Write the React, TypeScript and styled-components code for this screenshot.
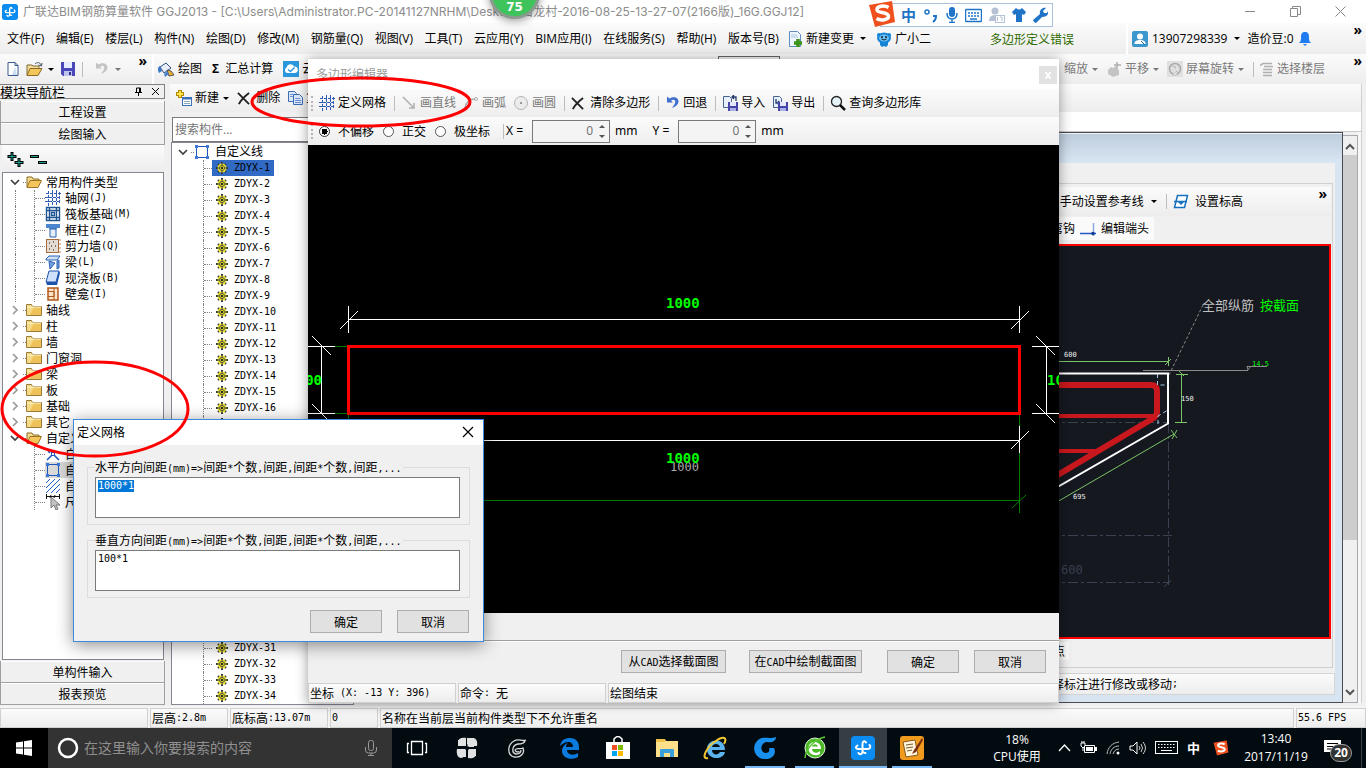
import React, { useEffect, useRef } from "react";
import styled, { createGlobalStyle, css } from "styled-components";

const ui = `"Open Sans", "Noto Sans CJK SC", sans-serif`;
const song = `"Noto Sans CJK SC", sans-serif`;
const mono = `"DejaVu Sans Mono", "Noto Sans CJK SC", monospace`;

const Global = createGlobalStyle`
  *, *::before, *::after { box-sizing: border-box; }
  html, body { margin: 0; padding: 0; background: #f0f0f0; }
  body { font: 12px/16px ${ui}; color: #000; overflow-x: hidden; }
  button, input, textarea { font: inherit; color: inherit; margin: 0; padding: 0; }
  button { background: none; border: 0; white-space: nowrap; }
  ul { list-style: none; margin: 0; padding: 0; }
  svg { display: block; flex: none; }
`;

/* ---------- text helper: narrow Latin between full-width Chinese ---------- */
const Narrow = styled.span`
  font-family: ${mono};
  font-size: 10px;
  white-space: pre;
`;
const Song = ({ children }: { children: string }) => (
  <>
    {children.split(/([\x20-\x7e]+)/).filter(Boolean).map((p, i) =>
      /^[\x20-\x7e]/.test(p) ? <Narrow key={i}>{p}</Narrow> : <span key={i}>{p}</span>
    )}
  </>
);

/* ---------- icons ---------- */
type IconProps = { children: React.ReactNode; w?: number; h?: number; box?: string };
const I = ({ children, w = 16, h = 16, box }: IconProps) => (
  <svg width={w} height={h} viewBox={box || `0 0 ${w} ${h}`} fill="none" aria-hidden="true">{children}</svg>
);
const GldMark = ({ s = 16 }: { s?: number }) => (
  <I w={s} h={s} box="0 0 24 24">
    <rect width="24" height="24" rx="4" fill="#0a8cf0" />
    <path d="M15 6.500C13.500 4 11.500 5.500 11.500 8v7.500c0 3-3 3.500-4 1.500M6.500 9.500C4 11 4.500 13 7.500 13h9c3 0 3.500-2.500 2-4M14.500 17q-2 .5-3-2" stroke="#fff" strokeWidth="2" strokeLinecap="round" />
  </I>
);
const NewFile = () => <I><path d="M3 1.500h7l3 3v10H3z" fill="#fff" stroke="#3a5a90" /><path d="M10 1.500v3h3" stroke="#3a5a90" /><path d="M10 6l2 8H7z" fill="#c8dcf4" /></I>;
const OpenFolder = ({ s = 16 }: { s?: number }) => (
  <I w={s} h={16} box="0 0 16 16"><path d="M1 13V3h5l1 2h6v2" fill="#f6dc92" stroke="#8c6a1e" /><path d="M1 13.500L4 6.500h11.500L12 13.500z" fill="#f4c55a" stroke="#9a7426" /></I>
);
const ToolOpen = () => <I w={18}><path d="M1 14V4h5l1 1h6v2" fill="#f6dc92" stroke="#7c6a3e" /><path d="M1 14.500L4 7.500h12L12 14.500z" fill="#f4c55a" stroke="#8a6a26" /><path d="M9 3c2-2 5-2 6 1M16 2l-.5 3-3-1" stroke="#456" /></I>;
const Closed = () => (
  <I><path d="M.5 2.500h5l1 2h9v9H.5z" fill="#f7da86" stroke="#9a7a38" /><path d="M8 5h7v8H4z" fill="#e8b03c" opacity=".6" /><path d="M1 5h14" stroke="#fff5d0" /></I>
);
const Save = () => <I><path d="M1 1h14v14H3l-2-2z" fill="#4a48b8" /><rect x="4" y="1" width="8" height="6" fill="#e6ecff" /><rect x="4" y="10" width="8" height="5" fill="#bcc4f0" /><rect x="9" y="11" width="2" height="3" fill="#33318c" /></I>;
const Undo = ({ c = "#3f6fcf" }: { c?: string }) => <I w={15}><path d="M2 1.500v6h6L6 5.500c3-2 5 0 4 2.500-.5 2-2 3-3 5 3-1 6-3 6.500-6 .5-4-4.500-6.500-9-3.500z" fill={c} /></I>;
const Paint = () => <I w={18}><path d="M3 6l6-4 5 5-7 5z" fill="#e8eef8" stroke="#30507c" /><path d="M3 5c-3 1-2 5-1 7l3-2z" fill="#3a77c8" /><path d="M10 9l4 1 3 4-5 1z" fill="#f0b030" stroke="#555" /><path d="M7 13l3-3 2 3-4 3z" fill="#4a82d0" /></I>;
const CloudIcon = () => <I><rect width="16" height="16" fill="#2a97dc" /><path d="M4 12a3 3 0 0 1-.5-5.500A4 4 0 0 1 11 5.500 3.200 3.200 0 0 1 12 12z" fill="#fff" /><path d="M5 8.500l2.500 2 4-4" stroke="#2a97dc" strokeWidth="1.500" /></I>;
const Cross = ({ s = 14, c = "#222", w = 2 }: { s?: number; c?: string; w?: number }) => <I w={s} h={s} box="0 0 14 14"><path d="M1 1l12 12M13 1C9 4 4 9 2 13" stroke={c} strokeWidth={w} /></I>;
const NewItem = () => <I w={17}><path d="M5 0v8M1 4h8" stroke="#b08a00" strokeWidth="4" /><path d="M5 1v6M2 4h6" stroke="#ffe34a" strokeWidth="2" /><rect x="7.500" y="7.500" width="9" height="8" fill="#fff" stroke="#3b70bc" /><path d="M7 8.500h10" stroke="#3b70bc" strokeWidth="2" /><path d="M9 11.500h6M9 13.500h6" stroke="#8ab" /></I>;
const Copy = () => <I><path d="M1.500 1.500h6l2 2v8h-8z" fill="#dce8fa" stroke="#3b6cb8" /><path d="M6.500 4.500h6l3 3v7h-9z" fill="#dce8fa" stroke="#3b6cb8" /><path d="M8 8.500h5M8 10.500h6M8 12.500h6M3 4.500h3M3 6.500h3" stroke="#6c94d0" /></I>;
const Grid = () => <I><path d="M1 3.500h15M0 7.500h15M0 11.500h15M3.500 1v15M7.500 0v15M11.500 0v15M14.500 2v12" stroke="#2f5cb4" strokeDasharray="3 1" /></I>;
const LineIc = () => <I><path d="M2 2l11 11M13 8v5H8" stroke="#b0b0b0" strokeWidth="1.500" /></I>;
const ArcIc = () => <I><path d="M2 13C3 7 6 4 12 4" stroke="#aaa" strokeWidth="1.500" /><circle cx="13" cy="4" r="1.500" fill="#fff" stroke="#aaa" /></I>;
const CircleIc = () => <I><circle cx="8" cy="8" r="6.500" fill="#ececec" stroke="#b4b4b4" /><rect x="7" y="7" width="2" height="2" fill="#999" /></I>;
const Import = ({ out }: { out?: boolean }) => <I><path d="M1.500 1.500h6l2 2v9h-8z" fill="#e8f0fc" stroke="#44648c" /><path d={out ? "M4 4v4h4M6 6l2 2-2 2" : "M14 6V2h-4M12 0l-2 2 2 2"} stroke="#223a6c" strokeWidth="1.300" /><rect x="6" y="7" width="10" height="9" fill="#4644a8" /><rect x="8" y="7" width="6" height="4" fill="#e4e8ff" /><rect x="8" y="13" width="6" height="3" fill="#a8b0e8" /></I>;
const Mag = () => <I><circle cx="6.500" cy="6.500" r="5" fill="#e6f4fa" stroke="#222" strokeWidth="1.300" /><path d="M10 10l5 5" stroke="#111" strokeWidth="2.500" /></I>;
const Hand = () => <I><path d="M2 9l3-3 2 1 3-2 1 3 2 1v5l-6 2-5-3z" fill="#c4c4c4" /><path d="M11 1v7M8 4h7" stroke="#b0b0b0" strokeWidth="1.500" /></I>;
const Rotate = () => <I><rect width="16" height="16" fill="#e0e0e0" /><circle cx="8" cy="8" r="5.500" stroke="#aaa" strokeWidth="1.500" /><path d="M5 14h5v-4zM9 6l-4-1M7 7h2" stroke="#bbb" fill="#f4f4f4" /></I>;
const Floors = () => <I w={14}><path d="M0 4.500l3-2h9M4 5.500h9M3 8.500h9M3 11.500h9M3 14.500h9" stroke="#b0b0b0" strokeWidth="1.700" /></I>;
const DocPlus = () => <I><path d="M2.500.5h8l3 3v12h-11z" fill="#eef6fd" stroke="#5c8cc0" /><path d="M4 4h6M4 6h7" stroke="#a8c8e4" /><path d="M11 8v8M7 12h8" stroke="#3c9418" strokeWidth="3.500" /></I>;
const Mascot = () => <I><circle cx="3" cy="4" r="2" fill="#1583d6" /><circle cx="13" cy="4" r="2" fill="#1583d6" /><ellipse cx="8" cy="7" rx="7" ry="5.500" fill="#1583d6" /><path d="M4 11h8v3l-2 2-2-1-2 1-2-2z" fill="#1583d6" /><ellipse cx="8" cy="7" rx="5" ry="3.500" fill="#6cc0f4" /><circle cx="6" cy="6" r="1" fill="#123" /><circle cx="10" cy="6" r="1" fill="#123" /><path d="M5.500 8q2.500 2 5 0" stroke="#123" /></I>;
const User = () => <I><rect width="16" height="16" rx="2" fill="#3b97cc" /><circle cx="8" cy="5.500" r="3" fill="#fff" /><path d="M2.500 13c0-3 2-4 5.500-4s5.500 1 5.500 4z" fill="#fff" /><path d="M9 10l4 4" stroke="#1d6a9c" /></I>;
const Bell = () => <I w={14}><path d="M7 1c3 0 4 2 4 5s0 4 2 6H1c2-2 2-3 2-6s1-5 4-5zM5 13h4L7 15z" fill="#1e7bf0" /></I>;
const Sogou = ({ s = 28 }: { s?: number }) => (
  <I w={s} h={s} box="0 0 28 28"><path d="M1 5L24 1l3 21-20 5z" fill="#f0501e" /><path d="M20.500 7.500c-4-2.500-12-1.500-11.500 2.500.5 3.500 11 1.500 11.500 6 .5 4-8 5-12 2.500" stroke="#fff" strokeWidth="3.500" /></I>
);
const Sheet = () => <I><path d="M4.500 1.500h10l-3 12h-10z" fill="#fff" stroke="#1670c0" strokeWidth="1.500" /><path d="M1 7.500h13" stroke="#1670c0" strokeWidth="1.500" /><path d="M5 8h6l-3 3z" fill="#1670c0" /></I>;
const EndIc = () => <I><path d="M0 12.500h16" stroke="#2458c8" strokeWidth="1.500" /><path d="M13.500 2v13" stroke="#88a8e0" strokeWidth="1.500" /><circle cx="13" cy="12.500" r="1.800" fill="#143a90" /></I>;
const Gear = () => (
  <I w={12} h={12}><path d="M6 0v12M0 6h12M2 2l8 8M10 2l-8 8" stroke="#333" strokeWidth="2" /><circle cx="6" cy="6" r="4.500" fill="#f0e828" /><circle cx="6" cy="6" r="2.500" stroke="#444" /><path d="M6 1v2M6 9v2M1 6h2M9 6h2" stroke="#444" /><rect x="5" y="5" width="2" height="2" fill="#222" /></I>
);
const Shape = () => <I><rect x="2.500" y="2.500" width="11" height="11" stroke="#1c56b8" /><path d="M1 1h3v3H1zM12 1h3v3h-3zM1 12h3v3H1zM12 12h3v3h-3z" fill="#3c78d8" /></I>;
const Chevron = ({ open }: { open?: boolean }) => <I w={10} h={10}><path d={open ? "M1 3l4 4 4-4" : "M3 1l4 4-4 4"} stroke={open ? "#404040" : "#999"} strokeWidth="1.700" /></I>;
const Raft = () => <I><path d="M1.500 1.500h13v13h-13zM4.500 1v14M11.500 1v14M1 4.500h14M1 11.500h14M6.500 6.500h3v3h-3z" stroke="#1f5493" strokeWidth="1.400" /></I>;
const Column = () => <I><path d="M1 2h14v4h-3v1H4V6H1z" fill="#4b86cc" /><path d="M5 7h6v8H5z" fill="#e4eefa" stroke="#2b62b0" /></I>;
const Wall = () => <I><rect x="1.500" y="1.500" width="12" height="13" fill="#e4dcd4" stroke="#a86c3c" /><path d="M4 5h1M8 4h1M6 8h1M10 8h1M4 11h1M8 12h1" stroke="#554" strokeWidth="1.500" /><path d="M15 1v14" stroke="#d08040" strokeDasharray="2 2" /></I>;
const Beam = () => <I><path d="M1 5l3-3h11l-3 4H1z" fill="#cfe0f6" stroke="#2a62b4" /><path d="M4 7l6 2-5 6zM12 7l2-1v8l-2 1z" fill="#70a0e0" stroke="#2a62b4" /></I>;
const Slab = () => <I><path d="M4 1h10l-3 11H1z" fill="#cfe0fa" stroke="#1d52ac" /><path d="M1 12l1 3h10l3-12-1-2-3 11z" fill="#1d52ac" /></I>;
const Niche = () => <I><path d="M3 2h10v12H3z" fill="#fbe2c8" stroke="#b05a1c" strokeWidth="1.500" /><path d="M3 5.500h6v5H3M9 2v12" stroke="#b05a1c" /></I>;
const Vertex = () => <I><path d="M2 14l6-6 6 6M8 8V5M3 5l2 2" stroke="#1c56b8" strokeWidth="1.500" /><rect x="6.500" y="6.500" width="3" height="3" fill="#fff" stroke="#1c56b8" /></I>;
const Hatch = () => <I><path d="M1 5l4-4M1 10l9-9M1 15L15 1M6 15l9-9M11 15l4-4" stroke="#1c60c8" /></I>;
const Dim = () => <I w={16}><path d="M1 2.500h14M1.500 0v5M14.500 0v5M6 1l-1 3M10 1l-1 3" stroke="#111" /><path d="M6 3v11l3-3 2 5 2-1-2-4h4z" fill="#c4c4c4" stroke="#777" /></I>;

/* ---------- shared parts ---------- */
const Arrow = styled.span<{ $dim?: boolean; $tight?: boolean }>`
  width: 0; height: 0; margin: 0 ${(p) => (p.$tight ? 1 : 3)}px;
  border: 3px solid transparent; border-bottom-width: 0;
  border-top-color: ${(p) => (p.$dim ? "#777" : "#000")};
`;
const Sep = styled.span`
  width: 1px; height: 15px; margin: 0 6px 0 1px; background: #bdbdbd; flex: none;
`;
const Tool = styled.button<{ $off?: boolean }>`
  display: flex; align-items: center; gap: 3px; padding-right: 7px;
  color: ${(p) => (p.$off ? "#7a7a7a" : "#000")};
`;
const More = styled.button`
  align-self: flex-start; font: bold 14px/14px ${ui};
`;
const barFill = css`background: linear-gradient(#fbfbfb, #ededed);`;

/* ---------- frame ---------- */
const Shell = styled.div`
  position: relative; min-height: 100vh; display: flex; flex-direction: column; overflow: hidden;
`;
const TitleBar = styled.header`
  height: 23px; flex: none; display: flex; align-items: center; gap: 5px; padding: 0 20px 0 2px;
  background: #fff; color: #8c8c8c; white-space: nowrap; font-family: Inter, "Noto Sans CJK SC", sans-serif;
`;
const Stretch = styled.span`flex: 1; min-width: 0;`;
const WinBtns = styled.div`display: flex; gap: 34px;`;
const MenuBar = styled.nav`
  height: 31px; flex: none; display: flex; align-items: center; padding-left: 7px; ${barFill}
  white-space: nowrap;
`;
const Menus = styled.div`display: flex; justify-content: space-between; width: 772px; flex: none; margin-right: 8px;`;
const Notice = styled.span`flex: 1; text-align: center; color: #2f6b00; font-family: ${song};`;
const Account = styled.div`
  width: 240px; height: 100%; display: flex; align-items: center; gap: 4px; padding: 0 4px;
  margin-left: auto; ${barFill} border-left: 2px solid #fff;
`;
const MainTools = styled.div`
  height: 30px; flex: none; display: flex; align-items: center; gap: 3px; ${barFill}
`;
const QuickTools = styled.div`
  width: 154px; height: 100%; display: flex; align-items: center; gap: 5px; padding: 0 5px;
  border-right: 2px solid #fff; flex: none;
  ${Tool} { padding: 0; }
  ${More} { margin-left: auto; }
`;
const ViewTools = styled.div`
  display: flex; align-items: center; align-self: stretch; margin-left: auto; padding-right: 4px;
`;
const ViewMore = styled.span`width: 30px; display: flex; justify-content: flex-end; align-self: stretch;`;
const HiddenBox = styled.input`width: 62px; height: 26px; margin-left: 370px; border: 1px solid #666; background: #f4f4f4;`;

const Body = styled.main`flex: 1; display: flex; min-height: 0;`;

/* ---------- left navigation ---------- */
const Nav = styled.aside`
  width: 165px; flex: none; display: flex; flex-direction: column; padding-bottom: 1px; font-family: ${song};
`;
const NavHead = styled.div`
  height: 15px; display: flex; align-items: center; gap: 8px; border: 1px solid #808080; border-left: 0;
  padding-right: 4px; margin-bottom: 2px; font-size: 13px; line-height: 13px;
`;
const NavButton = styled.button`
  height: 22px; flex: none; border: 1px solid #a0a0a0; border-width: 0 1px 1px; background: #f0f0f0;
  box-shadow: inset 0 1px #fff;
`;
const NavTools = styled.div`
  height: 27px; flex: none; display: flex; align-items: center; gap: 6px; padding-left: 5px; margin: 0 1px 0 2px;
  ${barFill}
`;
const TreeBox = styled.ul`
  flex: 1; margin: 0 1px 1px 2px; padding-top: 1px; background: #fff; border: 1px solid #828790; overflow: hidden;
`;
const Node = styled.li<{ $pad: number }>`
  height: 16px; display: flex; align-items: center; padding-left: ${(p) => p.$pad}px; white-space: nowrap;
`;
const Toggle = styled.span`width: 16px; display: flex; padding-left: 3px;`;
const Dots = styled.span<{ $w: number }>`width: ${(p) => p.$w}px; border-top: 1px dotted #808080; flex: none;`;
const Rail = styled.span<{ $w: number; $plain?: boolean }>`
  width: ${(p) => p.$w}px; align-self: stretch; flex: none; display: flex; align-items: center;
  border-left: 1px dotted ${(p) => (p.$plain ? "transparent" : "#808080")};
`;
const Leaf = styled.span<{ $bg?: string; $gap: number; $px?: number }>`
  height: 16px; display: flex; align-items: center; gap: ${(p) => p.$gap}px;
  padding: 0 ${(p) => p.$px || 0}px; background: ${(p) => p.$bg || "transparent"};
`;
const LeafText = styled.span`display: inline-flex; align-items: center;`;

/* ---------- component list ---------- */
const ListPane = styled.section`
  width: 184px; margin-left: 5px; flex: none; display: flex; flex-direction: column; padding-bottom: 1px;
`;
const ListTools = styled.div`
  height: 28px; display: flex; align-items: center; padding-left: 5px; ${barFill}
`;
const Search = styled.input`
  height: 25px; margin: 5px 0 0 2px; border: 1px solid #7a7a7a; background: #fff; padding: 0 2px;
  &::placeholder { color: #767676; }
`;
const ListTree = styled.ul`
  flex: 1; min-height: 0; background: #fff; border: 1px solid #828790; margin-left: 1px; padding-top: 1px; overflow: hidden;
`;

/* ---------- drawing workspace ---------- */
const Workspace = styled.section`
  flex: 1; min-width: 0; display: flex; flex-direction: column; margin: 0 4px 3px 4px; border-right: 1px solid #d0d0d0;
`;
const WorkBar = styled.div`height: 28px; flex: none; ${barFill}`;
const WorkGap = styled.div`height: 20px; flex: none; background: #fff; border-bottom: 1px solid #c8c8c8;`;
const Mdi = styled.div`flex: 1; min-height: 0; display: flex; background: #f0f0f0; border-right: 3px solid #f8f8f8;`;
const Inner = styled.div`
  flex: 1; min-width: 0; display: flex; flex-direction: column; border: 1px solid #4a4a52;
  background: #d7e4f2; padding: 0 7px 7px;
`;
const InnerTitle = styled.div`
  height: 30px; flex: none; margin: 0 -7px; background: linear-gradient(#becddc, #d9e6f4); border-top: 1px solid #eef4fa;
`;
const InnerBody = styled.div`flex: 1; min-height: 0; display: flex; flex-direction: column; background: #f0f0f0; padding-top: 20px;`;
const Panel = styled.div`
  flex: 1; min-height: 0; display: flex; flex-direction: column; border: 1px solid #d0d0d0; border-left: 0;
  margin-right: 2px; padding: 3px 1px 2px 0;
`;
const PanelBar = styled.div`
  height: 29px; flex: none; display: flex; align-items: center; justify-content: flex-end; padding-right: 4px; ${barFill}
`;
const PanelMore = styled.span`width: 77px; display: flex; justify-content: flex-end; align-self: stretch;`;
const Row2 = styled.div`height: 28px; flex: none; display: flex; justify-content: flex-end; padding: 1px 177px 4px 0;`;
const Row2Group = styled.div`display: flex; align-items: center; gap: 5px; background: #fafafa; padding-right: 5px;`;
const Cad = styled.div`flex: 1; min-height: 0; background: #15181f; border: 2px solid #f00; overflow: hidden;`;
const PointRow = styled.div`height: 26px; flex: none; display: flex; justify-content: flex-end; padding: 3px 262px 5px 0; background: #f0f0f0;`;
const PointTab = styled.span`background: #fafafa; padding: 0 4px; line-height: 20px;`;
const Hint = styled.div`
  height: 22px; flex: none; margin-top: 5px; display: flex; align-items: center; justify-content: flex-end; padding-right: 156px;
  border: 1px solid #d4d4d4; ${barFill} font-family: ${song};
`;
const Scroll = styled.div`
  width: 15px; flex: none; display: flex; flex-direction: column; align-items: center; justify-content: space-between;
  border: 1px solid #a8a8b0; border-left: 0; margin-top: 3px; background: #f0f0f0; padding: 6px 0 5px;
`;
const Thumb = styled.span`width: 14px; flex: 0 0 385px; margin: 3px 0 auto; background: #cdcdcd;`;

/* ---------- status bar ---------- */
const Status = styled.footer`
  height: 22px; flex: none; display: flex; gap: 2px; padding-top: 2px; font-family: ${song}; background: #f4f4f4;
`;
const Cell = styled.span<{ $w?: number }>`
  ${(p) => (p.$w ? `width: ${p.$w}px; flex: none;` : "flex: 1; min-width: 0;")}
  border: 1px solid #d0d0d0; padding: 0 1px; line-height: 18px; white-space: pre; display: flex; align-items: center;
  ${barFill}
`;

/* ---------- polygon editor window ---------- */
const Editor = styled.section`
  position: absolute; left: 308px; right: 307px; top: 59px; display: flex; flex-direction: column;
  background: #f0f0f0; box-shadow: 0 1px 12px rgba(0, 0, 0, 0.4);
`;
const EditorTitle = styled.div`
  height: 30px; display: flex; align-items: center; justify-content: space-between; padding: 2px 2px 0 8px;
  background: #fff; color: #9a9a9a; font-size: 12px;
`;
const DimClose = styled.button`width: 18px; height: 18px; background: #e2e2e2; color: #fff; line-height: 16px; font-weight: bold;`;
const EditorBar = styled.div`height: 28px; display: flex; align-items: center; padding-left: 3px; ${barFill}`;
const Grip = styled.span`width: 3px; height: 15px; margin-right: 5px; border-left: 2px dotted #b4b4b4;`;
const RadioLabel = styled.label`display: flex; align-items: center; gap: 8px; font-family: ${song}; margin-right: 9px;`;
const Radio = styled.input`
  appearance: none; width: 11px; height: 11px; border: 1px solid #555; border-radius: 50%; background: #fff;
  &:checked { background: radial-gradient(#000 0 3px, #fff 3px); border-color: #333; }
`;
const Spin = styled.span`
  width: 78px; height: 23px; display: flex; align-items: center; border: 1px solid #7a7a7a; background: #f4f4f4; margin: 0 5px 0 9px;
`;
const SpinInput = styled.input`
  width: 60px; border: 0; background: none; text-align: right; color: #6d6d6d; outline: 0;
`;
const SpinArrows = styled.span`display: flex; flex-direction: column; gap: 7px; margin-left: 6px;`;
const Up = styled.span`border: 3px solid transparent; border-top: 0; border-bottom-color: #555;`;
const Down = styled.span`border: 3px solid transparent; border-bottom: 0; border-top-color: #555;`;
const Unit = styled.label`white-space: pre; margin-right: 13px; font-family: "Noto Sans", sans-serif;`;
const AxisLabel = styled.label`white-space: pre; margin-left: 2px; font-family: "Noto Sans", sans-serif;`;
const Divider = styled.span`width: 1px; height: 15px; margin-left: 4px; background: #bdbdbd;`;
const Board = styled.div`height: 468px; background: #000; overflow: hidden;`;
const Blank = styled.div`height: 28px; border-bottom: 1px solid #a0a0a0;`;
const EditorActions = styled.div`
  height: 42px; display: flex; align-items: center; justify-content: flex-end; padding: 0 13px 2px 0; border-top: 1px solid #fff;
  font-family: ${song};
`;
const Push = styled.button<{ $w: number; $gap?: number }>`
  width: ${(p) => p.$w}px; height: 23px; margin-left: ${(p) => p.$gap || 15}px; border: 1px solid #adadad; background: #e1e1e1;
  font-family: ${song};
`;
const EditorStatus = styled.div`height: 20px; display: flex; gap: 2px; font-family: ${song};`;

/* ---------- grid dialog ---------- */
const Dialog = styled.section`
  position: absolute; left: 73px; top: 419px; width: 411px; display: flex; flex-direction: column;
  border: 1px solid #3b8ae0; background: #f0f0f0; box-shadow: 0 3px 16px rgba(0, 0, 0, 0.45); padding-bottom: 8px;
  font-family: ${song};
`;
const DialogTitle = styled.div`
  height: 25px; display: flex; align-items: center; justify-content: space-between; padding: 0 9px 2px 3px; background: #fff;
`;
const Group = styled.fieldset`
  margin: 14px 13px 0; padding: 2px 9px 6px 7px; border: 1px solid #dcdcdc; min-width: 0; height: 66px;
  & + & { margin-top: 7px; }
`;
const Legend = styled.legend`padding: 0 2px 0 0; line-height: 16px; height: 16px; white-space: nowrap;`;
const Area = styled.textarea`
  display: block; width: 100%; height: 41px; border: 1px solid #7a7a7a; background: #fff; outline: 0; resize: none;
  padding: 2px; font: 10px/12px ${mono};
  &::selection { background: #0078d7; color: #fff; }
`;
const DialogActions = styled.div`display: flex; justify-content: flex-end; padding: 12px 14px 0 0;`;

/* ---------- overlays on the title area ---------- */
const Ball = styled.div`
  position: absolute; left: 489px; top: -32px; width: 51px; height: 51px; border-radius: 50%; background: #3fc45c;
  border: 3px solid #8a9a8e; box-shadow: 0 2px 8px rgba(0, 0, 0, 0.4); color: #fff; font: bold 12px/14px "DejaVu Sans", sans-serif;
  display: flex; align-items: flex-end; justify-content: center; padding-bottom: 2px;
`;
const Ime = styled.div`
  position: absolute; left: 880px; top: 3px; width: 173px; height: 24px; display: flex; align-items: center; gap: 7px;
  padding-left: 20px; border: 1px solid #a9c1d9; background: #fff; color: #1f74c8;
  font: bold 15px/20px ${song};
`;
const ImeLogo = styled.span`position: absolute; left: -13px; top: -4px;`;
const Marks = styled.svg`position: absolute; left: 0; top: 0; pointer-events: none;`;

/* ---------- taskbar ---------- */
const Taskbar = styled.footer`height: 40px; flex: none; display: flex; background: #020b10; color: #fff;`;
const Start = styled.button`width: 48px; background: #000; display: flex; align-items: center; justify-content: center;`;
const SearchBox = styled.label`
  width: 344px; flex: none; display: flex; align-items: center; gap: 5px; padding: 0 14px 0 9px; background: #333;
`;
const SearchInput = styled.input`
  flex: 1; min-width: 0; border: 0; background: none; outline: 0; font-size: 14px;
  &::placeholder { color: #8f8f8f; opacity: 1; }
`;
const TaskBtn = styled.button<{ $w?: number; $active?: boolean; $on?: boolean }>`
  width: ${(p) => p.$w || 49}px; flex: none; display: flex; align-items: center; justify-content: center;
  background: ${(p) => (p.$active ? "#343e43" : "none")};
  border-bottom: 2px solid ${(p) => (p.$on ? "#76b9f5" : "transparent")}; border-top: 2px solid transparent;
`;
const TaskGap = styled.span<{ $w: number }>`width: ${(p) => p.$w}px; flex: none;`;
const Cpu = styled.div`
  margin-left: auto; width: 64px; text-align: center; line-height: 17px; padding-top: 3px; flex: none;
`;
const Tray = styled.div`display: flex; align-items: center; gap: 9px; margin: 0 12px 0 9px; flex: none;`;
const Lang = styled.b`margin-right: 4px; font-size: 13px;`;
const Clock = styled.div`width: 70px; text-align: center; line-height: 18px; padding-top: 2px; flex: none;`;
const Notify = styled.button`width: 48px; position: relative; margin-left: 3px; padding-left: 10px; border-right: 1px solid #3a4448; flex: none;`;
const Badge = styled.span`
  position: absolute; left: 16px; top: 16px; width: 22px; height: 18px; border-radius: 9px; border: 1px solid #999;
  background: #333; font: bold 12px/16px ${ui};
`;
const Edge = styled.span`width: 4px;`;

/* ---------- data ---------- */
const menus = ["文件(F)", "编辑(E)", "楼层(L)", "构件(N)", "绘图(D)", "修改(M)", "钢筋量(Q)", "视图(V)", "工具(T)", "云应用(Y)", "BIM应用(I)", "在线服务(S)", "帮助(H)", "版本号(B)"];
const common: [string, React.ReactNode][] = [
  ["轴网(J)", <Grid />], ["筏板基础(M)", <Raft />], ["框柱(Z)", <Column />], ["剪力墙(Q)", <Wall />],
  ["梁(L)", <Beam />], ["现浇板(B)", <Slab />], ["壁龛(I)", <Niche />],
];
const groups = ["轴线", "柱", "墙", "门窗洞", "梁", "板", "基础", "其它"];
const custom: [string, React.ReactNode][] = [["自定义点", <Vertex />], ["自定义线", <Shape />], ["自定义面", <Hatch />], ["尺寸标注", <Dim />]];

const Folder = ({ name, open }: { name: string; open?: boolean }) => (
  <Node $pad={4}><Toggle><Chevron open={open} /></Toggle><Dots $w={3} /><Leaf $gap={4}>{open ? <OpenFolder /> : <Closed />}<span>{name}</span></Leaf></Node>
);
const Item = ({ name, icon, bg, plain }: { name: string; icon: React.ReactNode; bg?: string; plain?: boolean }) => (
  <Node $pad={12}><Rail $w={19} $plain={plain} /><Rail $w={11}><Dots $w={10} /></Rail><Leaf $gap={4} $bg={bg}>{icon}<LeafText><Song>{name}</Song></LeafText></Leaf></Node>
);

const BoardDrawing = () => (
  <svg width="100%" height="468" viewBox="0 0 751 468" preserveAspectRatio="xMidYMin slice" fill="none" fontFamily="DejaVu Sans Mono">
    <g stroke="#008000">
      <path d="M27 201.500h13M27 268.500h13M40.500 270v98M711.500 270v98M40 355.500h671M704 363l14-13M34 363l14-13" />
    </g>
    <g stroke="#fff">
      <path d="M40 174.500h671M40.500 161v27M711.500 161v27M32 184l18-18M703 184l18-18" />
      <path d="M40 295.500h671M40.500 281v27M711.500 281v27M32 304l18-18M703 304l18-18" />
      <path d="M0 201.500h27M0 268.500h27M13.500 201v67M4 191l19 19M4 259l19 19" />
      <path d="M724 201.500h27M724 268.500h27M738.500 201v67M728 191l19 19M728 259l19 19" />
    </g>
    <rect x="40.500" y="201.500" width="671" height="67" stroke="#f00" strokeWidth="3" />
    <g fill="#aaa" fontSize="12"><text x="362" y="326">1000</text></g>
    <g fill="#0f0" fontSize="14" fontWeight="bold">
      <text x="358" y="163">1000</text><text x="358" y="318">1000</text>
      <text x="14" y="240" textAnchor="end">1000</text><text x="739" y="240">1000</text>
    </g>
  </svg>
);

const SectionDrawing = () => (
  <svg width="100%" height="391" viewBox="0 0 270 391" preserveAspectRatio="xMaxYMin meet" overflow="visible" fill="none">
    <g stroke="#3a4150" strokeDasharray="10 3 3 3">
      <path d="M-200 176.500h309M109.500 177v162M-200 289.500h313M-200 336.500h311M105 341l8-8" />
    </g>
    <path d="M-200 115.500h309M109.500 111v9M106 119l6-6M122.500 127v50M117 128.500h12M116 176.500h12M115 188L-200 371M112 184l6 8M118 184l-5 9M119 124l6 6" stroke="#7cc46a" />
    <path d="M84 124.500h105M188 120.500h20M188 120l1 4 3-4" stroke="#8a8a8a" />
    <path d="M144 59l-34 70" stroke="#888" strokeDasharray="3 2" />
    <path d="M-200 127.500h309v50L-200 355" stroke="#fff" strokeWidth="2" />
    <path d="M-200 139H92q6 0 6 6v21q0 4-5 7L-200 347" stroke="#c8181e" strokeWidth="6" />
    <path d="M-200 170H94M-200 205H38" stroke="#c8181e" strokeWidth="4" />
    <path d="M98.500 128v11h11M99 178v-8l10-6" stroke="#a8c8e8" strokeDasharray="4 3" />
    <g fill="#eee" fontFamily="DejaVu Sans Mono" fontSize="7"><text x="5" y="111">600</text><text x="122" y="155">150</text><text x="14" y="253">695</text></g>
    <text x="193" y="120" fill="#0f0" fontFamily="DejaVu Sans Mono" fontSize="7">14.5</text>
    <text x="2" y="328" fill="#3a4150" fontFamily="DejaVu Sans Mono" fontSize="12">600</text>
    <g fontFamily="Noto Sans CJK SC" fontSize="13"><text x="143" y="64" fill="#c0c0c0">全部纵筋</text><text x="201" y="64" fill="#0f0">按截面</text></g>
  </svg>
);

export default function App() {
  const first = useRef<HTMLTextAreaElement>(null);
  useEffect(() => {
    first.current?.focus({ preventScroll: true });
    first.current?.select();
  }, []);
  return (
    <Shell>
      <Global />
      <TitleBar>
        <GldMark />
        <Stretch>广联达BIM钢筋算量软件 GGJ2013 - [C:\Users\Administrator.PC-20141127NRHM\Desktop\白龙村-2016-08-25-13-27-07(2166版)_16G.GGJ12]</Stretch>
        <WinBtns>
          <button aria-label="最小化"><I w={11} h={11}><path d="M0 5.500h10" stroke="#888" /></I></button>
          <button aria-label="还原"><I w={11} h={11}><path d="M.5 2.500h7v8h-7zM2.500 2V.5h8v8H8" stroke="#888" /></I></button>
          <button aria-label="关闭"><I w={11} h={11}><path d="M.5.5l10 10M10.500.5l-10 10" stroke="#888" /></I></button>
        </WinBtns>
      </TitleBar>
      <MenuBar>
        <Menus>{menus.map((m) => <button key={m}>{m}</button>)}</Menus>
        <Tool><DocPlus />新建变更<Arrow /></Tool>
        <Tool><Mascot />广小二</Tool>
        <Notice>多边形定义错误</Notice>
        <Account><User />13907298339<Arrow />造价豆:0<Bell /><Stretch /><More>»</More></Account>
      </MenuBar>
      <MainTools>
        <QuickTools>
          <button aria-label="新建"><NewFile /></button>
          <Tool aria-label="打开"><ToolOpen /><Arrow $tight /></Tool>
          <button aria-label="保存"><Save /></button>
          <Sep />
          <Tool aria-label="撤销"><Undo c="#c4c4c4" /><Arrow $dim /></Tool>
          <More>»</More>
        </QuickTools>
        <Tool><Paint />绘图</Tool>
        <Tool><b>Σ</b>&nbsp;汇总计算</Tool>
        <Tool><CloudIcon />云检查</Tool>
        <HiddenBox aria-label="楼层" />
        <ViewTools>
          <Tool $off>缩放<Arrow $dim $tight /></Tool>
          <Tool $off><Hand />平移<Arrow $dim $tight /></Tool>
          <Tool $off><Rotate />屏幕旋转<Arrow $dim $tight /></Tool>
          <Sep />
          <Tool $off><Floors />选择楼层</Tool>
          <ViewMore><More>»</More></ViewMore>
        </ViewTools>
      </MainTools>
      <Body>
        <Nav>
          <NavHead>
            <Stretch>模块导航栏</Stretch>
            <I w={9} h={9}><path d="M2.500 1h4v4M1 5.500h7M2.500 1v4M5.500 1v4M4.500 6v3" stroke="#000" /></I>
            <I w={9} h={9}><path d="M1 1l7 7M8 1L1 8" stroke="#000" /></I>
          </NavHead>
          <NavButton>工程设置</NavButton>
          <NavButton>绘图输入</NavButton>
          <NavTools>
            <I w={17}><path d="M5 1v9M.5 5.500h9M12 7v9M7.500 11.500h9" stroke="#000" strokeWidth="3" /><path d="M5 2v7M1.500 5.500h7M12 8v7M8.500 11.500h7" stroke="#18a090" /></I>
            <I w={17}><path d="M0 5.500h9M8 11.500h9" stroke="#000" strokeWidth="3" /><path d="M1 5.500h7M9 11.500h7" stroke="#18a090" /></I>
          </NavTools>
          <TreeBox>
            <Folder name="常用构件类型" open />
            {common.map(([n, ic]) => <Item key={n} name={n} icon={ic} />)}
            {groups.map((g) => <Folder key={g} name={g} />)}
            <Folder name="自定义" open />
            {custom.map(([n, ic]) => <Item key={n} name={n} icon={ic} plain bg={n === "自定义线" ? "#d9d9d9" : undefined} />)}
          </TreeBox>
          <NavButton>单构件输入</NavButton>
          <NavButton>报表预览</NavButton>
        </Nav>
        <ListPane>
          <ListTools>
            <Tool><NewItem />新建<Arrow $tight /></Tool>
            <Tool><Cross s={13} />&nbsp;删除</Tool>
            <Tool><Copy />复制</Tool>
          </ListTools>
          <Search placeholder="搜索构件..." aria-label="搜索构件" />
          <ListTree>
            <Node $pad={3}><Toggle><Chevron open /></Toggle><Dots $w={3} /><Leaf $gap={5}><Shape /><LeafText>自定义线</LeafText></Leaf></Node>
            {Array.from({ length: 34 }, (_, i) => (
              <Node key={i} $pad={31}>
                <Rail $w={9}><Dots $w={8} /></Rail>
                <Leaf $gap={6} $px={4} $bg={i === 0 ? "#316ac5" : undefined}><Gear /><Narrow>{`ZDYX-${i + 1}`}</Narrow></Leaf>
              </Node>
            ))}
          </ListTree>
        </ListPane>
        <Workspace>
          <WorkBar />
          <WorkGap />
          <Mdi>
            <Inner>
              <InnerTitle />
              <InnerBody>
                <Panel>
                  <PanelBar>
                    <Tool>手动设置参考线&nbsp;<Arrow $tight /></Tool><Sep /><Tool><Sheet />&nbsp;设置标高</Tool>
                    <PanelMore><More>»</More></PanelMore>
                  </PanelBar>
                  <Row2><Row2Group><span>弯钩</span><EndIc /><span>编辑端头</span></Row2Group></Row2>
                  <Cad><SectionDrawing /></Cad>
                  <PointRow><PointTab>点</PointTab></PointRow>
                </Panel>
                <Hint><Song>选择标注进行修改或移动;</Song></Hint>
              </InnerBody>
            </Inner>
            <Scroll>
              <I w={10} h={10}><path d="M1 7l4-4 4 4" stroke="#555" strokeWidth="2" /></I>
              <Thumb />
              <I w={10} h={10}><path d="M1 3l4 4 4-4" stroke="#555" strokeWidth="2" /></I>
            </Scroll>
          </Mdi>
        </Workspace>
      </Body>
      <Status>
        <Cell $w={148} /><Cell $w={78}><Song>层高:2.8m</Song></Cell><Cell $w={98}><Song>底标高:13.07m</Song></Cell>
        <Cell $w={48}><Song>0</Song></Cell><Cell><Song>名称在当前层当前构件类型下不允许重名</Song></Cell><Cell $w={70}><Song>55.6 FPS</Song></Cell>
      </Status>

      <Taskbar>
        <Start aria-label="开始"><I><path d="M0 2.500l7-1v6H0zM8 1.300L16 0v7.500H8zM0 8.500h7v6l-7-1zM8 8.500h8V16l-8-1.300z" fill="#fff" /></I></Start>
        <SearchBox>
          <I w={22} h={22}><circle cx="11" cy="11" r="9" stroke="#fff" strokeWidth="2.500" /></I>
          <SearchInput placeholder="在这里输入你要搜索的内容" />
          <I w={14} h={18}><rect x="4.500" y="1.500" width="5" height="10" rx="2" stroke="#999" /><path d="M1.500 8v3q0 3 3 3h5q3 0 3-3V8M7 14v3M4 16.500h6" stroke="#999" /></I>
        </SearchBox>
        <TaskBtn aria-label="任务视图"><I w={22}><path d="M5.500 1.500h11v13h-11zM3 3.500H1.500v9H3M19 3.500h1.500v9H19" stroke="#fff" strokeWidth="1.300" /></I></TaskBtn>
        <TaskBtn $w={51} aria-label="应用"><I w={22} h={22}><path d="M10 1c-5-1-8 1-8 4 0 4 5 5 8 3zM21 9c1-5-1-8-4-8-4 0-5 5-3 8zM12 21c5 1 8-1 8-4 0-4-5-5-8-3zM1 12c-1 5 1 9 4 9 4 0 5-6 3-9z" fill="#e2e2e2" /><path d="M11 1h7v9h-7zM2 3h8v6H2zM12 12h8v7h-8zM3 12h7v8H3z" fill="#e2e2e2" /><path d="M10.500 0v7q0 3 4 4M22 10.500h-6q-4 0-5 4M11.500 22v-7q0-3-4-4M0 11.500h6q4 0 5-4" stroke="#020b10" /></I></TaskBtn>
        <TaskBtn $w={49} aria-label="广联达"><I w={22} h={22}><path d="M20 3C16 5 13 1 8 4 1 8 1 18 8 20c7 1 11-4 9-9-3 2-6-1-8 2 1 3 4 2 4 1M19 4c-1 3-4 3-7 3-6 1-7 9-2 10 4 0 5-2 5-4" stroke="#ddd" strokeWidth="1.300" /></I></TaskBtn>
        <TaskBtn $w={57} aria-label="Edge"><I w={22} h={22}><path d="M1 9C2 3 6 1 11 1c6 0 9 4 9 9v3H8c0 5 7 6 11 3v4c-7 4-16 1-16-6 0-4 3-7 6-8-2 2-2 3-2 4h7C14 3 6 4 1 9z" fill="#0a7ade" /></I></TaskBtn>
        <TaskBtn $w={40} aria-label="商店"><I w={24} h={24}><path d="M0 6h24v17H0z" fill="#fff" /><path d="M8 6V3q4-5 8 0v3" stroke="#fff" strokeWidth="1.500" /><path d="M6 9h5v5H6z" fill="#f25022" /><path d="M12 9h5v5h-5z" fill="#7fba00" /><path d="M6 15h5v5H6z" fill="#00a4ef" /><path d="M12 15h5v5h-5z" fill="#ffb900" /></I></TaskBtn>
        <TaskBtn $w={57} aria-label="文件资源管理器"><I w={22} h={20}><path d="M0 1h9l1 2h12v16H0z" fill="#ffe08a" /><path d="M0 1h9v3H0z" fill="#efc04a" /><path d="M4 19v-7q0-1 1-1h12q1 0 1 1v7h-4v-4H8v4z" fill="#3aa0dc" /></I></TaskBtn>
        <TaskBtn $w={40} aria-label="Internet Explorer"><I w={24} h={24}><path d="M22 14H9c0 5 6 6 8 2h5c-2 9-18 8-18-3C4 2 22 1 22 14zM9 11h8c-1-4-7-4-8 0z" fill="#5cb4ee" /><path d="M5 22c-8 2-1-12 8-17 7-5 12-4 8 3" stroke="#f4c832" strokeWidth="2" /></I></TaskBtn>
        <TaskGap $w={10} />
        <TaskBtn $w={40} $on aria-label="广联达浏览器"><I w={24} h={24}><path d="M23 1c0 4-4 6-9 5-6 0-8 9-2 11 4 0 5-2 4-5h5c3 6-2 12-10 11C2 22-2 12 4 5 9-1 16 4 23 1z" fill="#1a90ee" /></I></TaskBtn>
        <TaskGap $w={10} />
        <TaskBtn $w={39} $on aria-label="360浏览器"><I w={24} h={24}><circle cx="12" cy="12" r="10" fill="#4cb828" stroke="#dff4d4" /><path d="M18 13H9c0 4 5 5 8 2v3C12 21 5 18 5.500 12 6 4 18 4 18 13zM9 10.500h6c-1-3-5-3-6 0z" fill="#fff" /><path d="M2 22C3 12 12 3 22 1" stroke="#5cc836" strokeWidth="1.500" /></I></TaskBtn>
        <TaskGap $w={5} />
        <TaskBtn $w={48} $active $on aria-label="钢筋算量"><GldMark s={24} /></TaskBtn>
        <TaskGap $w={5} />
        <TaskBtn $w={40} $on aria-label="笔记"><I w={24} h={24}><rect width="24" height="24" rx="3" fill="#f09a1e" /><path d="M3 6l12-2 3 15-12 2z" fill="#fff4dc" stroke="#8a5a1a" /><path d="M6 9l7-1M6 12l7-1M7 15l5-1" stroke="#7a5a30" /><path d="M22 2l-8 12-2 4 4-2 7-12z" fill="#7c2e12" /></I></TaskBtn>
        <Cpu>18%<br />CPU使用</Cpu>
        <Tray>
          <I w={13} h={10}><path d="M1 8l5.500-6L12 8" stroke="#fff" strokeWidth="1.300" /></I>
          <I w={17} h={14}><path d="M4.500 4.500h10v7h-10z" stroke="#fff" /><path d="M6 6h7v4H6zM15 6h2v4h-2z" fill="#fff" /><path d="M1 2h4v3l-2 2-2-2zM2 0v2M4 0v2M3 6v4" stroke="#fff" fill="#020b10" /></I>
          <I w={14} h={14}><path d="M1 13C2 6 6 2 13 1M4 13c1-5 4-8 9-8M7 13c1-3 3-5 6-5" stroke="#bbb" /><circle cx="12" cy="12" r="1.500" fill="#fff" /></I>
          <I w={17} h={14}><path d="M1 5h3l4-4v12L4 9H1z" stroke="#fff" /><path d="M10 5q2 2 0 4M12 3q3 4 0 8M14 1q5 6 0 12" stroke="#ccc" /></I>
          <I w={23} h={14}><rect x=".5" y=".5" width="22" height="12" stroke="#fff" /><path d="M3 3.500h17M3 6.500h17" stroke="#fff" strokeDasharray="1.500 1.500" /><path d="M6 9.500h11" stroke="#fff" /></I>
          <Lang>中</Lang>
          <Sogou s={16} />
        </Tray>
        <Clock>13:40<br />2017/11/19</Clock>
        <Notify aria-label="通知"><I w={17} h={16}><path d="M0 0h17v12h-5l-4 3v-3H0z" fill="#fff" /><path d="M3 3.500h11M3 6.500h11M3 9h7" stroke="#000" /></I><Badge>20</Badge></Notify>
        <Edge />
      </Taskbar>

      <Editor aria-label="多边形编辑器">
        <EditorTitle>多边形编辑器<DimClose aria-label="关闭">x</DimClose></EditorTitle>
        <EditorBar>
          <Grip />
          <Tool><Grid />定义网格</Tool><Sep />
          <Tool $off><LineIc />画直线</Tool><Tool $off><ArcIc />画弧</Tool><Tool $off><CircleIc />画圆</Tool><Sep />
          <Tool><Cross s={13} />&nbsp;清除多边形</Tool><Sep />
          <Tool><Undo />回退</Tool><Sep />
          <Tool><Import />导入</Tool><Tool><Import out />导出</Tool><Sep />
          <Tool><Mag />查询多边形库</Tool>
        </EditorBar>
        <EditorBar>
          <Grip />
          <RadioLabel><Radio type="radio" name="mode" defaultChecked />不偏移</RadioLabel>
          <RadioLabel><Radio type="radio" name="mode" />正交</RadioLabel>
          <RadioLabel><Radio type="radio" name="mode" />极坐标</RadioLabel>
          <Divider />
          <AxisLabel htmlFor="dx">X =</AxisLabel>
          <Spin><SpinInput id="dx" defaultValue="0" /><SpinArrows><Up /><Down /></SpinArrows></Spin>
          <Unit htmlFor="dx">mm</Unit>
          <AxisLabel htmlFor="dy">Y =</AxisLabel>
          <Spin><SpinInput id="dy" defaultValue="0" /><SpinArrows><Up /><Down /></SpinArrows></Spin>
          <Unit htmlFor="dy">mm</Unit>
        </EditorBar>
        <Board><BoardDrawing /></Board>
        <Blank />
        <EditorActions>
          <Push $w={105}><Song>从CAD选择截面图</Song></Push>
          <Push $w={113} $gap={23}><Song>在CAD中绘制截面图</Song></Push>
          <Push $w={72} $gap={25}>确定</Push>
          <Push $w={72}>取消</Push>
        </EditorActions>
        <EditorStatus>
          <Cell $w={148}><Song>坐标 (X: -13 Y: 396)</Song></Cell><Cell $w={148}><Song>命令: 无</Song></Cell><Cell>绘图结束</Cell>
        </EditorStatus>
      </Editor>

      <Dialog role="dialog" aria-label="定义网格">
        <DialogTitle>定义网格<button aria-label="关闭"><I w={12} h={12}><path d="M1 1l10 10M11 1L1 11" stroke="#000" strokeWidth="1.200" /></I></button></DialogTitle>
        <Group>
          <Legend><label htmlFor="hgap"><Song>水平方向间距(mm)=&gt;间距*个数,间距,间距*个数,间距,...</Song></label></Legend>
          <Area id="hgap" ref={first} defaultValue="1000*1" spellCheck={false} />
        </Group>
        <Group>
          <Legend><label htmlFor="vgap"><Song>垂直方向间距(mm)=&gt;间距*个数,间距,间距*个数,间距,...</Song></label></Legend>
          <Area id="vgap" defaultValue="100*1" spellCheck={false} />
        </Group>
        <DialogActions><Push $w={72}>确定</Push><Push $w={72}>取消</Push></DialogActions>
      </Dialog>

      <Ball>75</Ball>
      <Ime>
        <ImeLogo><Sogou /></ImeLogo>
        <span>中</span>
        <I><circle cx="4" cy="5" r="2" stroke="#1f74c8" strokeWidth="1.500" /><path d="M10 9h3q0 4-3 6" stroke="#1f74c8" strokeWidth="2" /></I>
        <I w={12}><rect x="3" width="6" height="10" rx="3" fill="#1f74c8" /><path d="M1 6q0 6 5 6t5-6M6 12v4M3 15.500h6" stroke="#1f74c8" strokeWidth="1.500" /></I>
        <I w={17}><rect x=".5" y="2.500" width="16" height="12" rx="1" stroke="#1f74c8" strokeWidth="1.500" /><path d="M3 6h11M3 9h11" stroke="#1f74c8" strokeWidth="1.500" strokeDasharray="2 1" /><path d="M5 12h7" stroke="#1f74c8" strokeWidth="1.500" /></I>
        <I w={16}><circle cx="6" cy="4" r="3.500" fill="#b4c0d4" /><path d="M0 14q0-6 6-6 4 0 4 2v4z" fill="#b4c0d4" /><rect x="6.500" y="8.500" width="9" height="7" fill="#fff" stroke="#b4c0d4" /><path d="M8.500 10v4M11 10h2v4" stroke="#b4c0d4" /></I>
        <I w={14}><path d="M4 1q3 3 6 0l4 4-2 3-2-1v8H4V7L2 8 0 5z" fill="#1f74c8" /></I>
        <I w={15}><path d="M1 15l-1-2 7-6c-1-3 2-7 6-6l-3 3 1 2 3 0 1-2c1 4-2 6-6 6l-6 6z" fill="#1f74c8" /></I>
      </Ime>
      <Marks width="480" height="470" fill="none" stroke="#f00" strokeWidth="3">
        <ellipse cx="361" cy="102" rx="109" ry="24" />
        <ellipse cx="95" cy="409" rx="93" ry="47" />
      </Marks>
    </Shell>
  );
}
